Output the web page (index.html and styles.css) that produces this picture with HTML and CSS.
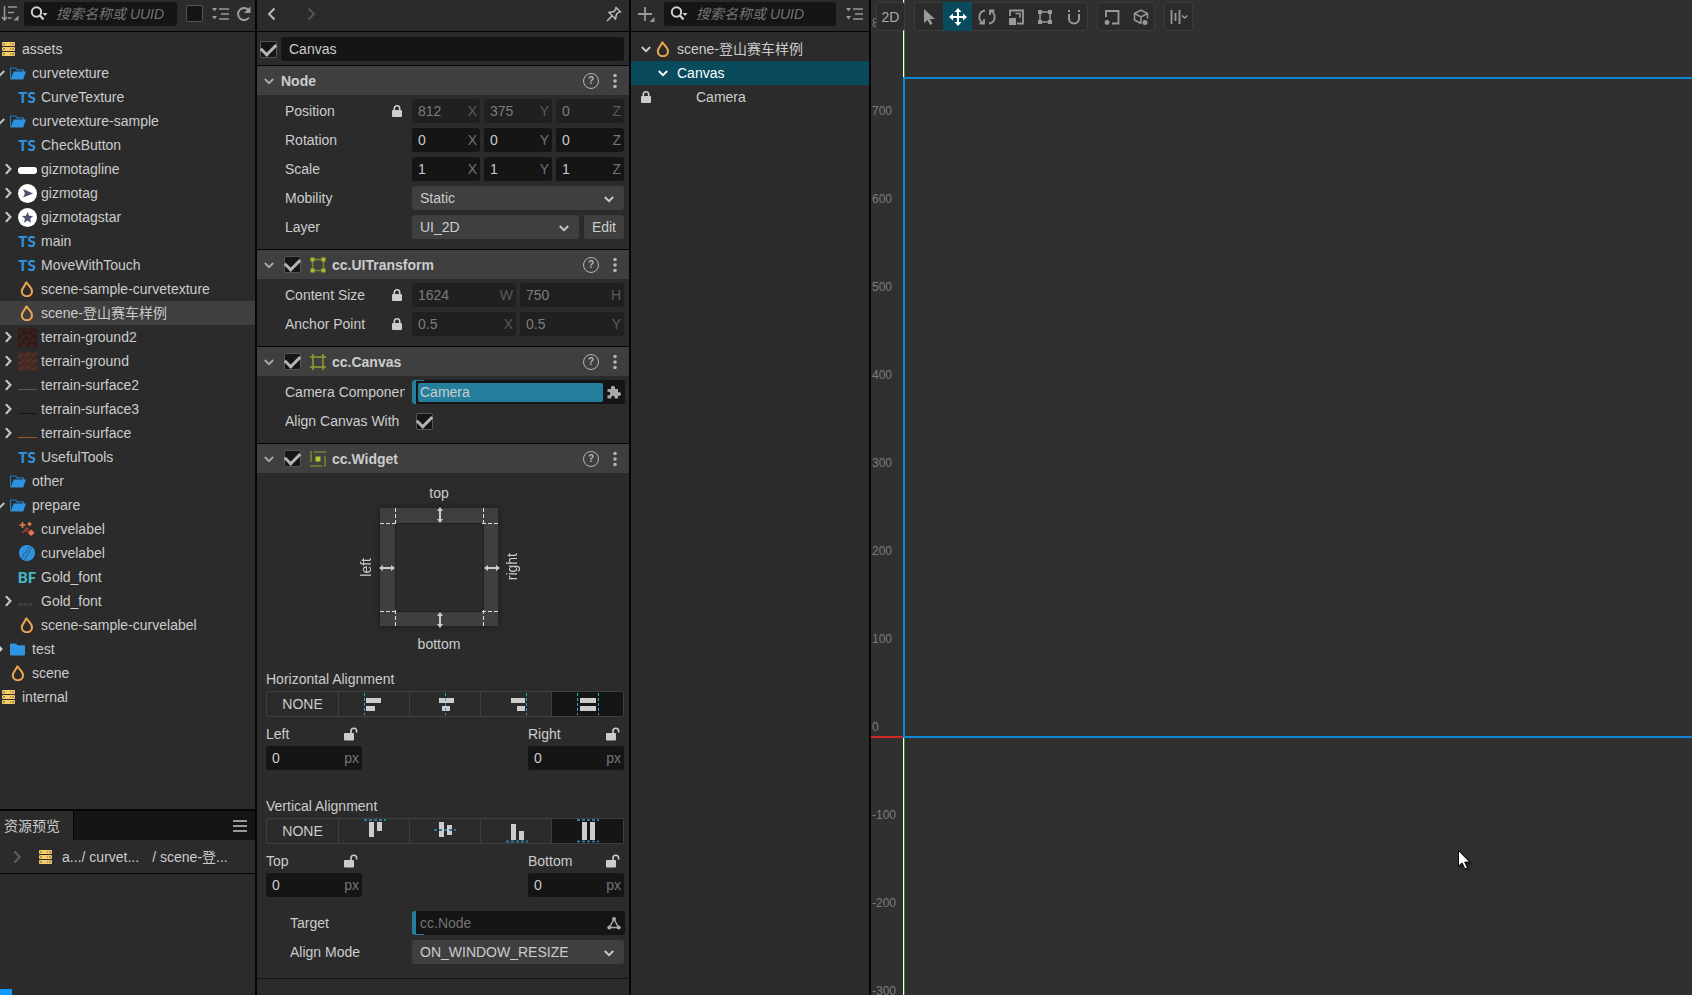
FILE: index.html
```html
<!DOCTYPE html>
<html lang="zh-CN">
<head>
<meta charset="utf-8">
<meta name="viewport" content="width=device-width, initial-scale=1">
<title>Scene Editor</title>
<link rel="stylesheet" href="styles.css">
</head>
<body>
<svg class="sprite" aria-hidden="true">
  <symbol id="down" viewBox="0 0 12 12"><path d="M1.8 4 6 8.2 10.2 4" fill="none" stroke="currentColor" stroke-width="1.8"/></symbol>
  <symbol id="right" viewBox="0 0 12 12"><path d="M2.900 1.200 7.500 6 2.900 10.800" fill="none" stroke="currentColor" stroke-width="2"/></symbol>
  <symbol id="db" viewBox="0 0 13 14"><path fill="#f6cd68" d="M1 0h11q1 0 1 1v2q0 1-1 1H1q-1 0-1-1V1q0-1 1-1zM1 5h11q1 0 1 1v2q0 1-1 1H1q-1 0-1-1V6q0-1 1-1zM1 10h11q1 0 1 1v2q0 1-1 1H1q-1 0-1-1v-2q0-1 1-1z"/><path stroke="#6d5a2e" d="M1 2h2M8 2h1M10 2h2M1 7h2M8 7h1M10 7h2M1 12h2M8 12h1M10 12h2"/></symbol>
  <symbol id="open" viewBox="0 0 16 13"><path d="M.6 12V1h5l1.500 1.800h6.300V5" fill="none" stroke="#2b76b0" stroke-width="1.200"/><path d="M3.800 4.600H16L13.200 12.500H.6z" fill="#2f94df"/></symbol>
  <symbol id="folder" viewBox="0 0 16 13"><path d="M1 .5h5L7.500 2.300H14q1 0 1 1V11.500q0 1-1 1H1q-1 0-1-1v-10q0-1 1-1z" fill="#2f94df"/></symbol>
  <symbol id="flame" viewBox="0 0 14 16"><path d="M6.300.8C7.500 4 12 6.200 12 10.200A5.100 5 0 0 1 1.800 10.200C1.800 6.500 5.800 4.500 6.300.8z" fill="none" stroke="#eaa94c" stroke-width="2"/></symbol>
  <symbol id="search" viewBox="0 0 18 16"><circle cx="6.500" cy="6" r="4.700" fill="none" stroke="#d0d0d0" stroke-width="2"/><path d="M10 9.500 13.500 13.500" stroke="#d0d0d0" stroke-width="2.200"/><path d="M12.500 7h5L15 10z" fill="#d0d0d0"/></symbol>
  <symbol id="list" viewBox="0 0 17 16"><path d="M7 3h10M9 8h8M7 13h10" stroke="#999" stroke-width="1.500"/><path d="M0 2h5L2.500 5.500zM0 10h5l-2.500 3.500z" fill="#999"/></symbol>
  <symbol id="lock" viewBox="0 0 10 12"><path d="M2.300 6V3.500a2.700 2.700 0 0 1 5.400 0V6" fill="none" stroke="#ccc" stroke-width="1.600"/><rect y="5" width="10" height="7" rx="1" fill="#ccc"/></symbol>
  <symbol id="unlock" viewBox="0 0 14 14"><path d="M7 7V4a2.800 2.800 0 0 1 5.600 0v1.500" fill="none" stroke="#ccc" stroke-width="1.600"/><rect y="6" width="10" height="7.500" rx="1" fill="#ccc"/></symbol>
  <symbol id="dots" viewBox="0 0 4 16"><g fill="#b4b4b4"><circle cx="2" cy="2.500" r="1.800"/><circle cx="2" cy="8" r="1.800"/><circle cx="2" cy="13.500" r="1.800"/></g></symbol>
</svg>

<main class="app">
  <div class="panel assets">
    <div class="bar">
      <button class="icon-btn" aria-label="Sort"><svg width="17" height="16" viewBox="0 0 17 16" fill="none" stroke="#999" stroke-width="1.500"><path d="M2.500 0v14M0 11l2.500 3L5 11M6 1h9M6 6.500h6M6 12h3.500"/><path d="M16.500 9.500v5h-5z" fill="#999" stroke="none"/></svg></button>
      <label class="search"><svg width="18" height="16"><use href="#search"/></svg><input type="text" placeholder="搜索名称或 UUID" aria-label="搜索资源"></label>
      <input class="check gap-l" type="checkbox" aria-label="Filter">
      <button class="icon-btn gap-l" aria-label="Collapse"><svg width="17" height="16"><use href="#list"/></svg></button>
      <button class="icon-btn" aria-label="Refresh"><svg width="16" height="16" viewBox="0 0 16 16"><path d="M13 11.500A6 6 0 1 1 12.500 4" fill="none" stroke="#a0a0a0" stroke-width="1.900"/><path d="M14.500.5V7H8z" fill="#a0a0a0"/></svg></button>
    </div>
    <ul class="tree">
      <li><i class="tw"></i><i class="ic"><svg width="13" height="14"><use href="#db"/></svg></i>assets</li>
      <li class="d1"><i class="tw"><svg width="12" height="12"><use href="#down"/></svg></i><i class="ic"><svg width="16" height="13"><use href="#open"/></svg></i>curvetexture</li>
      <li class="d2"><i class="tw"></i><i class="ic ts">TS</i>CurveTexture</li>
      <li class="d1"><i class="tw"><svg width="12" height="12"><use href="#down"/></svg></i><i class="ic"><svg width="16" height="13"><use href="#open"/></svg></i>curvetexture-sample</li>
      <li class="d2"><i class="tw"></i><i class="ic ts">TS</i>CheckButton</li>
      <li class="d2"><i class="tw"><svg width="12" height="12"><use href="#right"/></svg></i><i class="ic"><svg width="19" height="19"><rect y="7" width="19" height="7" rx="3" fill="#fff"/></svg></i>gizmotagline</li>
      <li class="d2"><i class="tw"><svg width="12" height="12"><use href="#right"/></svg></i><i class="ic"><svg width="19" height="19"><circle cx="9.500" cy="9.500" r="9.500" fill="#fff"/><path d="M5 5l10 4.500L5 13.500l2-4z" fill="#4d4f70"/></svg></i>gizmotag</li>
      <li class="d2"><i class="tw"><svg width="12" height="12"><use href="#right"/></svg></i><i class="ic"><svg width="19" height="19"><circle cx="9.500" cy="9.500" r="9.500" fill="#fff"/><path d="M9.500 4l1.600 3.800 4 .3-3 2.600 1 4-3.600-2.200L6 14.700l1-4-3-2.600 4-.3z" fill="#4d4f70"/></svg></i>gizmotagstar</li>
      <li class="d2"><i class="tw"></i><i class="ic ts">TS</i>main</li>
      <li class="d2"><i class="tw"></i><i class="ic ts">TS</i>MoveWithTouch</li>
      <li class="d2"><i class="tw"></i><i class="ic"><svg width="14" height="16"><use href="#flame"/></svg></i>scene-sample-curvetexture</li>
      <li class="d2 hover"><i class="tw"></i><i class="ic"><svg width="14" height="16"><use href="#flame"/></svg></i>scene-登山赛车样例</li>
      <li class="d2"><i class="tw"><svg width="12" height="12"><use href="#right"/></svg></i><i class="ic"><svg width="19" height="19"><rect width="19" height="19" fill="#301e1d"/><path d="M2 4h2M8 2h3M14 5h3M4 9h2M11 8h2M1 13h3M8 14h2M14 12h3M5 17h3M13 17h2" stroke="#4a211f" stroke-width="2"/><path d="M5 3h2M12 5h2M2 8h1M8 10h2M16 15h2M4 14h2" stroke="#201b1b" stroke-width="2"/></svg></i>terrain-ground2</li>
      <li class="d2"><i class="tw"><svg width="12" height="12"><use href="#right"/></svg></i><i class="ic"><svg width="19" height="19"><rect width="19" height="19" fill="#432923"/><path d="M0 5l5-3M7 5l5-4M14 4l5-3M0 12l6-4M8 11l5-4M14 11l5-3M1 18l5-4M8 17l5-3M14 18l5-3" stroke="#573328" stroke-width="2"/></svg></i>terrain-ground</li>
      <li class="d2"><i class="tw"><svg width="12" height="12"><use href="#right"/></svg></i><i class="ic"><svg width="19" height="19"><path d="M0 13.500h19" stroke="#5c584a"/></svg></i>terrain-surface2</li>
      <li class="d2"><i class="tw"><svg width="12" height="12"><use href="#right"/></svg></i><i class="ic"><svg width="19" height="19"><path d="M0 13.500h19" stroke="#141414"/></svg></i>terrain-surface3</li>
      <li class="d2"><i class="tw"><svg width="12" height="12"><use href="#right"/></svg></i><i class="ic"><svg width="19" height="19"><path d="M0 13.500h19" stroke="#a2562a"/></svg></i>terrain-surface</li>
      <li class="d2"><i class="tw"></i><i class="ic ts">TS</i>UsefulTools</li>
      <li class="d1"><i class="tw"></i><i class="ic"><svg width="16" height="13"><use href="#open"/></svg></i>other</li>
      <li class="d1"><i class="tw"><svg width="12" height="12"><use href="#down"/></svg></i><i class="ic"><svg width="16" height="13"><use href="#open"/></svg></i>prepare</li>
      <li class="d2"><i class="tw"></i><i class="ic"><svg width="16" height="16" viewBox="0 0 16 16"><path d="M3.500 1v6M.5 4h6M10.500 1v4M8.500 3h4" stroke="#ee7a50" stroke-width="1.600"/><path d="M3 12l5-5 4 5M6 10l3 1" fill="none" stroke="#97463b" stroke-width="1.300"/><path d="M12.500 8.500l3 3.500-3.500 3-3-3z" fill="#f0705a"/></svg></i>curvelabel</li>
      <li class="d2"><i class="tw"></i><i class="ic"><svg width="16" height="16" viewBox="0 0 16 16"><circle cx="8" cy="8" r="8" fill="#2f94df"/><path d="M11 2C6 4 9 6 7 8M13 3C9 5 12 7 9 9M7 7C3 9 6 11 3 13M9 9C6 11 8 13 5 15" fill="none" stroke="#23567f" stroke-width="1"/></svg></i>curvelabel</li>
      <li class="d2"><i class="tw"></i><i class="ic ts bf">BF</i>Gold_font</li>
      <li class="d2"><i class="tw"><svg width="12" height="12"><use href="#right"/></svg></i><i class="ic"><svg width="19" height="19"><path d="M0 12.500h15" stroke="#3e3e3e" stroke-width="3" stroke-dasharray="4 1"/></svg></i>Gold_font</li>
      <li class="d2"><i class="tw"></i><i class="ic"><svg width="14" height="16"><use href="#flame"/></svg></i>scene-sample-curvelabel</li>
      <li class="d1"><i class="tw"><svg width="12" height="12"><use href="#right"/></svg></i><i class="ic"><svg width="16" height="13"><use href="#folder"/></svg></i>test</li>
      <li class="d1"><i class="tw"></i><i class="ic"><svg width="14" height="16"><use href="#flame"/></svg></i>scene</li>
      <li><i class="tw"></i><i class="ic"><svg width="13" height="14"><use href="#db"/></svg></i>internal</li>
    </ul>
    <section class="preview">
      <div class="tabs"><button class="tab">资源预览</button><button class="icon-btn" aria-label="Menu"><svg width="14" height="14"><path d="M0 2h14M0 7h14M0 12h14" stroke="#999" stroke-width="2"/></svg></button></div>
      <nav class="crumbs"><svg class="dim" width="14" height="14"><use href="#right"/></svg><svg class="crumb-db" width="13" height="14"><use href="#db"/></svg><span>a.../</span><span class="crumb-mid">curvet...</span><span>/</span><span>scene-登...</span></nav>
    </section>
    <span class="corner"></span>
  </div>

  <div class="panel inspector">
    <div class="bar nav">
      <button class="icon-btn" aria-label="Back"><svg width="14" height="14" viewBox="0 0 14 14"><path d="M9.500 1.500 4 7l5.500 5.500" fill="none" stroke="#bbb" stroke-width="2"/></svg></button>
      <button class="icon-btn" aria-label="Forward"><svg width="14" height="14" viewBox="0 0 14 14"><path d="M4.500 1.500 10 7l-5.500 5.500" fill="none" stroke="#555" stroke-width="2"/></svg></button>
      <button class="icon-btn push" aria-label="Pin"><svg width="16" height="16" viewBox="0 0 16 16" fill="none" stroke="#bbb" stroke-width="1.500"><path d="M9.500 1l5.500 5.500M10.500 2 8 5.500 3 6.500l6.500 6.500L10.500 8 14 5.500M6 10l-5 5"/></svg></button>
    </div>
    <div class="name-row"><input class="check" type="checkbox" checked aria-label="Active"><input class="text" type="text" value="Canvas" aria-label="Name"></div>

    <section class="comp">
      <header><svg class="fold" width="12" height="12"><use href="#down"/></svg><h2>Node</h2><button class="help" aria-label="Help">?</button><button class="icon-btn" aria-label="More"><svg width="4" height="16"><use href="#dots"/></svg></button></header>
      <div class="body">
        <div class="row"><label for="px">Position</label><svg class="lk" width="10" height="12"><use href="#lock"/></svg>
          <div class="vec"><span class="num off"><input id="px" value="812" disabled>X</span><span class="num off"><input value="375" disabled aria-label="Position Y">Y</span><span class="num off"><input value="0" disabled aria-label="Position Z">Z</span></div></div>
        <div class="row"><label for="rx">Rotation</label>
          <div class="vec"><span class="num"><input id="rx" value="0">X</span><span class="num"><input value="0" aria-label="Rotation Y">Y</span><span class="num"><input value="0" aria-label="Rotation Z">Z</span></div></div>
        <div class="row"><label for="sx">Scale</label>
          <div class="vec"><span class="num"><input id="sx" value="1">X</span><span class="num"><input value="1" aria-label="Scale Y">Y</span><span class="num"><input value="1" aria-label="Scale Z">Z</span></div></div>
        <div class="row"><label for="mob">Mobility</label><div class="vec"><span class="sel"><select id="mob"><option>Static</option></select><svg width="12" height="12"><use href="#down"/></svg></span></div></div>
        <div class="row"><label for="lay">Layer</label><div class="vec"><span class="sel"><select id="lay"><option>UI_2D</option></select><svg width="12" height="12"><use href="#down"/></svg></span><button class="edit">Edit</button></div></div>
      </div>
    </section>

    <section class="comp">
      <header><svg class="fold" width="12" height="12"><use href="#down"/></svg><input class="check" type="checkbox" checked aria-label="Enable cc.UITransform"><svg class="ci" width="16" height="16"><path d="M2.500 2.500h11v11h-11z" fill="none" stroke="#80852f" stroke-width="1.500"/><path d="M.5.5h4v4h-4zM11.500.5h4v4h-4zM.5 11.500h4v4h-4zM11.500 11.500h4v4h-4z" fill="#a9b82f"/></svg><h2>cc.UITransform</h2><button class="help" aria-label="Help">?</button><button class="icon-btn" aria-label="More"><svg width="4" height="16"><use href="#dots"/></svg></button></header>
      <div class="body">
        <div class="row"><label for="cw">Content Size</label><svg class="lk" width="10" height="12"><use href="#lock"/></svg><div class="vec"><span class="num off"><input id="cw" value="1624" disabled>W</span><span class="num off"><input value="750" disabled aria-label="Height">H</span></div></div>
        <div class="row"><label for="ax">Anchor Point</label><svg class="lk" width="10" height="12"><use href="#lock"/></svg><div class="vec"><span class="num off"><input id="ax" value="0.5" disabled>X</span><span class="num off"><input value="0.5" disabled aria-label="Anchor Y">Y</span></div></div>
      </div>
    </section>

    <section class="comp">
      <header><svg class="fold" width="12" height="12"><use href="#down"/></svg><input class="check" type="checkbox" checked aria-label="Enable cc.Canvas"><svg class="ci" width="16" height="16"><path d="M3 0v16M13 0v16M0 3h16M0 13h16" stroke="#989e32" stroke-width="1.500"/></svg><h2>cc.Canvas</h2><button class="help" aria-label="Help">?</button><button class="icon-btn" aria-label="More"><svg width="4" height="16"><use href="#dots"/></svg></button></header>
      <div class="body">
        <div class="row"><label for="cam">Camera Component</label><div class="vec"><span class="ref"><input id="cam" class="filled" value="Camera" readonly><svg width="14" height="14" viewBox="0 0 14 14"><path d="M.5 4h3.700a2.100 2.100 0 1 1 3.600 0H11v3.300a2 2 0 1 1 0 3.400V13.500H7.500a1.800 1.800 0 1 0-3 0h-4V10a1.800 1.800 0 1 0 0-3z" fill="#aaa"/></svg></span></div></div>
        <div class="row"><label for="acs">Align Canvas With</label><div class="vec"><input id="acs" class="check inset" type="checkbox" checked></div></div>
      </div>
    </section>

    <section class="comp">
      <header><svg class="fold" width="12" height="12"><use href="#down"/></svg><input class="check" type="checkbox" checked aria-label="Enable cc.Widget"><svg class="ci" width="16" height="16"><path d="M1 0v11M4 1h12M15 5v11M0 15h12" stroke="#80852f" stroke-width="1.500"/><path d="M5.500 5.500h5v5h-5z" fill="#b4c92f"/></svg><h2>cc.Widget</h2><button class="help" aria-label="Help">?</button><button class="icon-btn" aria-label="More"><svg width="4" height="16"><use href="#dots"/></svg></button></header>
      <div class="widget">
        <div class="diagram">
          <span class="t">top</span>
          <span class="l">left</span>
          <svg class="frame" width="118" height="118">
            <path d="M0 0h118v118H0z" fill="#3f3f3f"/><path d="M15.500 15.500h88v88h-88z" fill="#2b2b2b" stroke="#1f1f1f"/>
            <path d="M15.500 0v16M103.500 0v16M15.500 102v16M103.500 102v16M0 15.500h16M102 15.500h16M0 103.500h16M102 103.500h16" stroke="#ddd" stroke-dasharray="4 2"/>
            <g stroke="#ccc" stroke-width="2"><path d="M60 2v10M60 107v10M2 60h10M107 60h10"/></g>
            <path d="M60-1l3 4h-6zM60 15l3-4h-6zM60 104l3 4h-6zM60 120l3-4h-6zM-1 60l4-3v6zM15 60l-4-3v6zM104 60l4-3v6zM120 60l-4-3v6z" fill="#ccc"/>
          </svg>
          <span class="r">right</span>
          <span class="b">bottom</span>
        </div>
        <h3>Horizontal Alignment</h3>
        <div class="group">
          <button>NONE</button>
          <button aria-label="Left"><svg width="24" height="24"><path d="M4 6h15v5H4zM4 14h9v5H4z" fill="#ccc"/><path d="M2.500 1v22" stroke="#37a0c4" stroke-dasharray="3 2"/></svg></button>
          <button aria-label="Center"><svg width="24" height="24"><path d="M6 6h15v5H6zM9 14h8v5H9z" fill="#ccc"/><path d="M12.500 1v22" stroke="#37a0c4" stroke-dasharray="3 2"/></svg></button>
          <button aria-label="Right"><svg width="24" height="24"><path d="M7 6h14v5H7zM13 14h8v5h-8z" fill="#ccc"/><path d="M22.500 1v22" stroke="#37a0c4" stroke-dasharray="3 2"/></svg></button>
          <button class="on" aria-label="Stretch"><svg width="24" height="24"><path d="M4 6h16v5H4zM4 14h16v5H4z" fill="#ccc"/><path d="M1.500 1v22M22.500 1v22" stroke="#37a0c4" stroke-dasharray="3 2"/></svg></button>
        </div>
        <div class="pair">
          <div><label for="wl">Left<svg width="14" height="14"><use href="#unlock"/></svg></label><span class="num"><input id="wl" value="0">px</span></div>
          <div><label for="wr">Right<svg width="14" height="14"><use href="#unlock"/></svg></label><span class="num"><input id="wr" value="0">px</span></div>
        </div>
        <h3 class="second">Vertical Alignment</h3>
        <div class="group">
          <button>NONE</button>
          <button aria-label="Top"><svg width="24" height="24"><path d="M7 3h5v15H7zM15 3h5v9h-5z" fill="#ccc"/><path d="M2 1h22" stroke="#2d7d99" stroke-width="2" stroke-dasharray="3 2"/></svg></button>
          <button aria-label="Middle"><svg width="24" height="24"><path d="M6 3h5v15H6zM14 6h5v10h-5z" fill="#ccc"/><path d="M1 11h22" stroke="#2d7d99" stroke-width="2" stroke-dasharray="3 2"/></svg></button>
          <button aria-label="Bottom"><svg width="24" height="24"><path d="M7 5h5v16H7zM15 12h5v9h-5z" fill="#ccc"/><path d="M2 22.500h22" stroke="#2d7d99" stroke-width="2" stroke-dasharray="3 2"/></svg></button>
          <button class="on" aria-label="Stretch"><svg width="24" height="24"><path d="M6 3h5v18H6zM14 3h5v18h-5z" fill="#ccc"/><path d="M1 1h22M1 22.500h22" stroke="#2d7d99" stroke-width="2" stroke-dasharray="3 2"/></svg></button>
        </div>
        <div class="pair">
          <div><label for="wt">Top<svg width="14" height="14"><use href="#unlock"/></svg></label><span class="num"><input id="wt" value="0">px</span></div>
          <div><label for="wb">Bottom<svg width="14" height="14"><use href="#unlock"/></svg></label><span class="num"><input id="wb" value="0">px</span></div>
        </div>
        <div class="tail">
          <div class="row"><label for="tg">Target</label><div class="vec"><span class="ref low"><input id="tg" placeholder="cc.Node" readonly><svg width="14" height="14" viewBox="0 0 14 14"><path d="M7 3 2.500 11.500h9z" fill="none" stroke="#aaa" stroke-width="1.500"/><g fill="#aaa"><circle cx="7" cy="3" r="2"/><circle cx="2.300" cy="11.500" r="2"/><circle cx="11.700" cy="11.500" r="2"/></g></svg></span></div></div>
          <div class="row"><label for="am">Align Mode</label><div class="vec"><span class="sel"><select id="am"><option>ON_WINDOW_RESIZE</option></select><svg width="12" height="12"><use href="#down"/></svg></span></div></div>
        </div>
      </div>
    </section>
  </div>

  <div class="panel hierarchy">
    <div class="bar">
      <button class="icon-btn" aria-label="Create"><svg width="17" height="16" viewBox="0 0 17 16"><path d="M7 1v14M0 8h14" stroke="#999" stroke-width="1.800"/><path d="M16.500 11v5h-5z" fill="#999"/></svg></button>
      <label class="search"><svg width="18" height="16"><use href="#search"/></svg><input type="text" placeholder="搜索名称或 UUID" aria-label="搜索节点"></label>
      <button class="icon-btn" aria-label="Collapse"><svg width="17" height="16"><use href="#list"/></svg></button>
    </div>
    <ul class="nodes">
      <li><i class="tw"><svg width="12" height="12"><use href="#down"/></svg></i><i class="ic"><svg width="14" height="16"><use href="#flame"/></svg></i>scene-登山赛车样例</li>
      <li class="picked"><i class="tw"></i><i class="ic"><svg width="12" height="12"><use href="#down"/></svg></i>Canvas</li>
      <li class="leaf"><i class="tw"><svg width="10" height="12"><use href="#lock"/></svg></i><i class="ic"></i>Camera</li>
    </ul>
  </div>

  <div class="scene">
    <div class="ruler"><span>800</span><span>700</span><span>600</span><span>500</span><span>400</span><span>300</span><span>200</span><span>100</span><span>0</span><span>-100</span><span>-200</span><span>-300</span></div>
    <span class="axis-y"></span><span class="axis-x"></span><span class="bounds"></span>
    <div class="tools">
      <div class="set"><button>2D</button></div>
      <div class="set">
        <button aria-label="Select"><svg width="18" height="18"><path d="M4 1v14l3.500-3 2.500 5 2.500-1.200L10 11h5z" fill="#999"/></svg></button>
        <button class="on" aria-label="Move"><svg width="18" height="18"><path d="M9 3v12M3 9h12" stroke="#fff" stroke-width="2"/><path d="M9 0l3.500 4h-7zM9 18l3.500-4h-7zM0 9l4-3.500v7zM18 9l-4-3.500v7z" fill="#fff"/></svg></button>
        <button aria-label="Rotate"><svg width="18" height="18" fill="none" stroke="#999" stroke-width="1.800"><path d="M7 2.500A6.500 6.500 0 0 0 5.500 15M11 15.500A6.500 6.500 0 0 0 12.500 3M1.500 15.500H6V11M16.500 2.500H12V7"/></svg></button>
        <button aria-label="Scale"><svg width="18" height="18"><path d="M3 8V2.500h13v13h-6" fill="none" stroke="#999" stroke-width="1.800"/><path d="M2 10h7v7H2z" fill="#999"/><path d="M8.500 5.500H13V10" fill="none" stroke="#999" stroke-width="1.500"/></svg></button>
        <button aria-label="Rect"><svg width="18" height="18"><path d="M4 4h10v10H4z" fill="none" stroke="#999" stroke-width="1.500"/><path d="M2 2h4v4H2zM12 2h4v4h-4zM2 12h4v4H2zM12 12h4v4h-4z" fill="#999"/></svg></button>
        <button aria-label="Snap"><svg width="18" height="18"><path d="M4 6v4.500a5 5 0 0 0 10 0V6M4 2v2M14 2v2" fill="none" stroke="#999" stroke-width="2"/></svg></button>
      </div>
      <div class="set">
        <button aria-label="Pivot"><svg width="18" height="18"><path d="M3 9V3h12.500v12.500H9" fill="none" stroke="#999" stroke-width="1.800"/><circle cx="4" cy="14.500" r="2.400" fill="#999"/></svg></button>
        <button aria-label="Local"><svg width="18" height="18"><path d="M9 15.500 2.500 12V5.500L9 2l6.500 3.500v5M2.500 5.500 9 9l6.500-3.500M9 9v6.500" fill="none" stroke="#999" stroke-width="1.500"/><circle cx="13" cy="14.500" r="2.500" fill="#999"/></svg></button>
      </div>
      <div class="set"><button aria-label="Align"><svg width="18" height="18"><path d="M1.500 2v14M5.500 5v8M9.500 2v14" stroke="#999" stroke-width="1.800"/><path d="M12 7.500 14.700 10l2.800-2.500" fill="none" stroke="#999" stroke-width="1.500"/></svg></button></div>
    </div>
    <svg class="cursor" width="13" height="20" viewBox="0 0 13 20"><path d="M.5.5v15.700l3.500-3.300 3 6 2.500-1.100-2.800-5.700h5z" fill="#fff" stroke="#000"/></svg>
  </div>
</main>
</body>
</html>
```
FILE: styles.css
```css
* { box-sizing: border-box; }
body {
  margin: 0;
  background: #2b2b2b;
  color: #ccc;
  font: 14px/24px "Liberation Sans", Arial, "Noto Sans CJK SC", sans-serif;
}
ul { list-style: none; margin: 0; padding: 0; }
h2, h3 { margin: 0; font-size: 14px; }
svg { display: block; flex: none; overflow: visible; }
i { font-style: normal; }
button, input, select { font: inherit; color: inherit; margin: 0; padding: 0; border: 0; background: none; }
input { min-width: 0; outline: none; }
.sprite { position: absolute; width: 0; height: 0; overflow: hidden; }

.app {
  display: grid;
  grid-template-columns: minmax(0, 257fr) minmax(0, 374fr) minmax(0, 240fr) minmax(0, 821fr);
  height: 100vh;
  overflow: hidden;
}
.panel { display: flex; flex-direction: column; min-height: 0; overflow: hidden; border-right: 2px solid #050505; }
.bar { display: flex; flex: none; align-items: center; gap: 7px; height: 32px; padding: 0 3px 4px 2px; border-bottom: 1px solid #050505; }
.icon-btn { display: flex; align-items: center; justify-content: center; flex: none; }

.search { display: flex; flex: 1; align-items: center; gap: 8px; min-width: 0; height: 24px; padding: 0 6px; border-radius: 3px; background: #151515; }
.search input { flex: 1; width: 0; height: 24px; }
.search input::placeholder { color: #747474; font-style: italic; opacity: 1; }
.assets .search { margin-left: -2px; }
.gap-l { margin-left: 2px; }

.check { appearance: none; display: grid; place-items: center; flex: none; width: 17px; height: 17px; border: 1px solid #555; border-radius: 2px; background: #151515; }
.check:checked::before { content: ""; width: 12px; height: 7px; margin-bottom: 3px; border: solid #b4b4b4; border-width: 0 0 3px 3px; transform: rotate(-45deg); }

/* Asset tree */
.assets { position: relative; }
.tree { flex: 1; min-height: 0; padding-top: 5px; overflow: hidden; }
.tree li { display: flex; align-items: center; height: 24px; margin-left: -16px; white-space: nowrap; }
.tree .d1 { padding-left: 10px; }
.tree .d2 { padding-left: 19px; }
.tree .hover { background: #3f3f3f; }
.tw { display: flex; flex: none; width: 14px; }
.ic { display: flex; flex: none; justify-content: center; width: 20px; margin-right: 4px; }
.ts { color: #2f94df; font: 900 15px/24px Lato, sans-serif; }
.bf { color: #46b6c9; }

.preview { flex: none; height: 186px; border-top: 2px solid #050505; }
.tabs { display: flex; justify-content: space-between; height: 29px; padding-right: 8px; background: #151515; }
.tab { padding: 0 13px 0 4px; border-right: 1px solid #050505; background: #2b2b2b; }
.crumbs { display: flex; align-items: center; gap: 4px; height: 34px; padding-left: 11px; border-bottom: 1px solid #050505; white-space: nowrap; }
.crumb-db { margin: 0 6px 0 10px; }
.crumb-mid { margin-right: 9px; }
.dim { color: #5a5a5a; }
.corner { position: absolute; left: 0; bottom: 0; width: 12px; height: 6px; background: #0d99ff; }

/* Inspector */
.nav { gap: 25px; padding: 0 7px 4px 8px; }
.push { margin-left: auto; }
.name-row { display: flex; flex: none; align-items: center; gap: 4px; padding: 5px 5px 4px 3px; }
.text { flex: 1; height: 24px; padding: 0 8px; border-radius: 3px; background: #151515; }
.comp { flex: none; border-top: 1px solid #050505; }
.comp:last-child { border-bottom: 1px solid #151515; }
.comp header { display: flex; align-items: center; gap: 6px; height: 29px; padding: 0 12px 0 6px; background: #3f3f3f; }
.comp header .check, .comp header .ci { margin-left: 3px; }
.comp h2 { flex: 1; }
.fold { color: #aaa; }
.help { width: 16px; height: 16px; margin-right: 8px; border: 1px solid #b4b4b4; border-radius: 50%; color: #b4b4b4; font-size: 10px; font-weight: 700; line-height: 14px; text-align: center; }
.body { display: grid; gap: 5px; padding: 4px 5px 10px 28px; }
.row { display: grid; grid-template-columns: minmax(0, 127fr) minmax(0, 212fr); align-items: center; min-height: 24px; }
.row label { grid-area: 1 / 1; margin-right: 7px; overflow: hidden; white-space: nowrap; }
.lk { grid-area: 1 / 1; justify-self: end; margin-right: 10px; }
.vec { grid-area: 1 / 2; display: flex; gap: 4px; min-width: 0; }
.num { display: flex; flex: 1; align-items: center; min-width: 0; height: 24px; padding: 0 3px 0 6px; border-radius: 3px; background: #151515; color: #747474; }
.num input { flex: 1; width: 0; color: #ccc; }
.off { background: #202020; color: #5a5a5a; }
.off input { color: #7c7c7c; }
.sel { position: relative; flex: 1; min-width: 0; color: #ccc; }
.sel select { appearance: none; display: block; width: 100%; height: 24px; padding: 0 24px 0 8px; border-radius: 3px; background: #3f3f3f; }
.sel svg { position: absolute; right: 9px; top: 7px; pointer-events: none; }
.edit { height: 24px; margin-left: 1px; padding: 0 8px; border-radius: 3px; background: #3f3f3f; }
.ref { position: relative; display: flex; flex: 1; align-items: center; gap: 4px; height: 24px; padding: 0 4px 0 2px; border-left: 4px solid #247f9c; border-radius: 3px; background: #151515; }
.ref::before { content: ""; position: absolute; left: 0; top: 0; width: 8px; height: 1px; background: #247f9c; }
.low::before { top: auto; bottom: 0; }
.ref input { flex: 1; height: 19px; padding: 0 2px; border-radius: 2px; }
.ref input::placeholder { color: #747474; opacity: 1; }
.ref .filled { background: #247f9c; }
.inset { margin-left: 4px; }

.widget { padding: 8px 5px 14px 9px; }
.diagram { display: grid; grid-template: 24px 118px 30px / 16px 118px 16px; gap: 3px 6px; place-content: center; place-items: center; margin: 0 12px 8px 0; }
.t { grid-area: 1 / 2; }
.b { grid-area: 3 / 2; }
.frame { grid-area: 2 / 2; box-shadow: 0 0 6px #1a1a1a; }
.l, .r { writing-mode: vertical-rl; line-height: 16px; transform: rotate(180deg); }
.l { grid-area: 2 / 1; }
.r { grid-area: 2 / 3; }
.widget h3 { font-weight: 400; }
.widget .second { margin-top: 24px; }
.group { display: grid; grid-template-columns: 72fr repeat(4, 71fr); height: 26px; border: 1px solid #3f3f3f; border-radius: 2px; }
.group button { display: flex; align-items: center; justify-content: center; border-right: 1px solid #3f3f3f; }
.group button:last-child { border-right: 0; }
.group .on { background: #151515; }
.pair { display: flex; justify-content: space-between; margin-top: 5px; }
.pair > div { width: 96px; }
.pair label { display: flex; align-items: center; justify-content: space-between; padding-right: 4px; }
.tail { display: grid; gap: 5px; margin-top: 14px; }
.tail .row { grid-template-columns: minmax(0, 146fr) minmax(0, 212fr); }
.tail label { padding-left: 24px; }

/* Hierarchy */
.hierarchy .bar { gap: 10px; padding: 0 6px 4px 7px; }
.hierarchy .search { margin-left: -1px; }
.nodes { padding-top: 5px; }
.nodes li { display: flex; align-items: center; height: 24px; padding-left: 8px; }
.nodes .tw { width: 14px; justify-content: center; }
.nodes .picked { background: #094a5c; color: #fff; }
.nodes .leaf .ic { width: 39px; }

/* Scene view */
.scene { position: relative; overflow: hidden; background: #303030; }
.ruler { display: flex; flex-direction: column; margin-top: -21px; padding-left: 1px; color: #7c7c7c; font-size: 12px; }
.ruler span { flex: none; height: 88px; line-height: 88px; }
.axis-y { position: absolute; left: 32px; top: 0; bottom: 0; width: 2px; border-left: 1px solid #fff; background: #2e8b1f; }
.axis-x { position: absolute; left: 0; top: 736px; width: 32px; height: 2px; background: #cf2a22; }
.bounds { position: absolute; left: 32px; right: -2px; top: 77px; height: 661px; border: 2px solid #0d86d6; background: #303030; }
.tools { position: absolute; left: 5px; top: 2px; display: flex; gap: 9px; }
.set { display: flex; overflow: hidden; border-radius: 4px; background: #2b2b2b; box-shadow: inset 0 0 0 1px #3c3c3c; }
.set button { display: flex; align-items: center; justify-content: center; width: 29px; height: 29px; color: #aaa; font-size: 14px; }
.set .on { background: #094a5c; }
.cursor { position: absolute; left: 587px; top: 850px; filter: drop-shadow(2px 2px 1px #0006); }
```
